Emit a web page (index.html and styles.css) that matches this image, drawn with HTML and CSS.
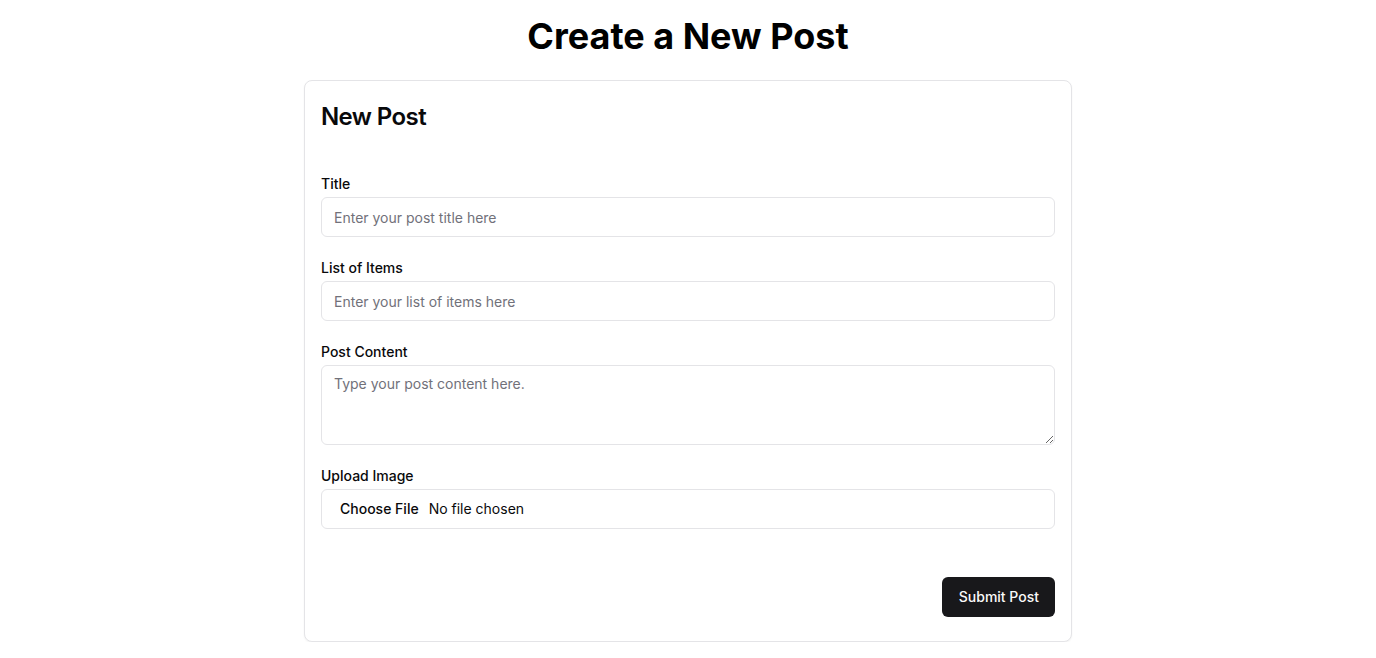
FILE: index.html
```html
<!DOCTYPE html>
<html lang="en">
<head>
<meta charset="utf-8">
<title>Create a New Post</title>
<link rel="stylesheet" href="styles.css">
</head>
<body>
<main class="page">
  <h1 class="page-title">Create a New Post</h1>
  <section class="card">
    <h2 class="card-title">New Post</h2>
    <form class="form">
      <div class="field">
        <label class="label" for="title">Title</label>
        <input class="input" id="title" type="text" placeholder="Enter your post title here">
      </div>
      <div class="field">
        <label class="label" for="items">List of Items</label>
        <input class="input" id="items" type="text" placeholder="Enter your list of items here">
      </div>
      <div class="field">
        <label class="label" for="content">Post Content</label>
        <textarea class="textarea" id="content" placeholder="Type your post content here."></textarea>
      </div>
      <div class="field">
        <label class="label" for="image">Upload Image</label>
        <input class="input file" id="image" type="file">
      </div>
      <div class="actions">
        <button class="button" type="button">Submit Post</button>
      </div>
    </form>
  </section>
</main>
</body>
</html>
```
FILE: styles.css
```css
* { box-sizing: border-box; }
html, body { margin: 0; padding: 0; background: #ffffff; }
body {
  font-family: Inter, "Liberation Sans", sans-serif;
  color: #09090b;
}
.page {
  padding-top: 16px;
  display: flex;
  flex-direction: column;
  align-items: center;
}
.page-title {
  margin: 0 0 24px;
  font-size: 36px;
  line-height: 40px;
  font-weight: 700;
  color: #000;
}
.card {
  width: 768px;
  border: 1px solid #e4e4e7;
  border-radius: 8px;
  box-shadow: 0 1px 2px rgba(0,0,0,0.05);
  padding: 20px 16px 24px;
  background: #fff;
}
.card-title {
  margin: 0 0 41px;
  font-size: 24px;
  line-height: 32px;
  font-weight: 600;
  letter-spacing: -0.6px;
}
.form {
  display: flex;
  flex-direction: column;
  gap: 21px;
}
.field {
  display: flex;
  flex-direction: column;
  gap: 3px;
}
.label {
  font-size: 14px;
  line-height: 20px;
  font-weight: 500;
}
.input, .textarea {
  width: 100%;
  height: 40px;
  border: 1px solid #e4e4e7;
  border-radius: 6px;
  padding: 0 12px;
  font-family: inherit;
  font-size: 14px;
  color: #09090b;
  background: #fff;
  outline: none;
}
.textarea {
  height: 80px;
  padding: 8px 12px;
  line-height: 20px;
  resize: vertical;
  display: block;
}
.input::placeholder, .textarea::placeholder { color: #71717a; }
.file {
  padding-top: 0;
  padding-bottom: 0;
  font-size: 14px;
  line-height: 38px;
}
.file::file-selector-button {
  border: 0;
  background: transparent;
  font-family: inherit;
  font-size: 14px;
  font-weight: 500;
  color: #09090b;
  padding: 1px 6px;
  margin-right: 4px;
}
.actions {
  display: flex;
  justify-content: flex-end;
  padding-top: 27px;
}
.button {
  height: 40px;
  padding: 0 16px 2px 17px;
  border: 0;
  border-radius: 6px;
  background: #18181b;
  color: #fafafa;
  font-family: inherit;
  font-size: 14px;
  font-weight: 500;
}
```
